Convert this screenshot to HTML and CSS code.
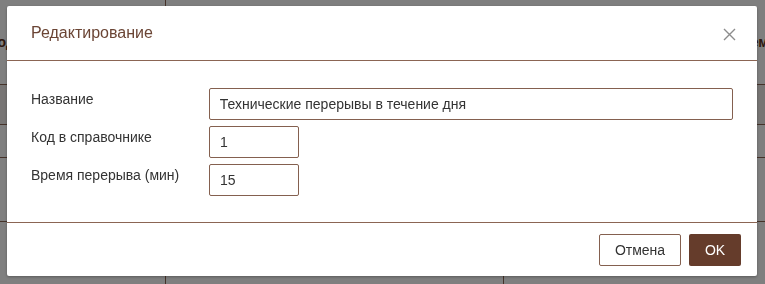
FILE: index.html
```html
<!DOCTYPE html>
<html lang="ru">
<head>
    <meta charset="UTF-8">
    <meta name="viewport" content="width=device-width, initial-scale=1.0">
    <title>Перерывы</title>
    <link rel="stylesheet" href="styles.css">
</head>
<body>

    <table class="grid">
        <thead>
            <tr class="row-head">
                <th>Код</th>
                <th></th>
                <th>Время</th>
            </tr>
        </thead>
        <tbody>
            <tr class="row-a row-hover"><td></td><td></td><td></td></tr>
            <tr class="row-b"><td></td><td></td><td class="cell-end">в</td></tr>
            <tr class="row-c"><td></td><td></td><td></td></tr>
            <tr class="row-c"><td></td><td></td><td></td></tr>
            <tr class="row-c"><td></td><td>30</td><td>0</td></tr>
        </tbody>
    </table>

    <div class="overlay"></div>

    <div class="modal">
        <div class="modal-header">
            <h3 class="modal-title">Редактирование</h3>
            <span class="modal-close">
                <svg width="13" height="13" viewBox="0 0 13 13">
                    <path d="M1 1 L12 12 M12 1 L1 12" stroke="#8c8c8c" stroke-width="1.4" fill="none"/>
                </svg>
            </span>
        </div>

        <form class="modal-body" id="formPerer">
            <div class="field">
                <label for="nama">Название</label>
                <input type="text" id="nama" class="inp" value="Технические перерывы в течение дня">
            </div>
            <div class="field">
                <label for="kod">Код в справочнике</label>
                <input type="text" id="kod" class="inp inp-short" value="1">
            </div>
            <div class="field">
                <label for="vremya">Время перерыва (мин)</label>
                <input type="text" id="vremya" class="inp inp-short" value="15">
            </div>
        </form>

        <div class="modal-footer">
            <button type="button" class="btn btn-cancel">Отмена</button>
            <button type="button" class="btn btn-ok">OK</button>
        </div>
    </div>

</body>
</html>
```

FILE: styles.css
```css
body {
    font-family: "Liberation Sans", Arial, sans-serif;
    margin: 0;
    padding: 0;
    background-color: white;
    color: #333;
    width: 765px;
    height: 284px;
    overflow: hidden;
}

/* table behind the dialog */
.grid {
    width: 800px;
    margin-left: -26px;
    border-collapse: collapse;
    table-layout: fixed;
}
.grid th, .grid td {
    border-bottom: 1px solid #8b6553;
    padding: 0 10px;
    text-align: left;
    font-size: 14px;
    color: #333;
    white-space: nowrap;
    overflow: hidden;
}
.grid th:nth-child(1), .grid td:nth-child(1) { width: 166px; }
.grid th:nth-child(2), .grid td:nth-child(2) { width: 317px; border-left: 1px solid #8b6553; }
.grid td:nth-child(3) { border-left: 1px solid #8b6553; }
.grid th {
    color: #5a3020;
    font-weight: bold;
    height: 84px;
}
.grid th:nth-child(1) { padding-left: 15px; }
.grid th:nth-child(3) { padding-left: 229px; }
.row-a td { height: 39px; }
.row-b td { height: 32px; }
.row-c td { height: 48px; }
.row-hover td { background-color: #eeebe9; }
.cell-end {
    padding-left: 276px !important;
}
.row-c td { vertical-align: top; padding-top: 15px; }

.overlay {
    position: fixed;
    inset: 0;
    background-color: rgba(0, 0, 0, 0.5);
}

/* dialog */
.modal {
    position: fixed;
    left: 7px;
    top: 6px;
    width: 750px;
    height: 270px;
    background: white;
    border-radius: 2px;
    box-shadow: 0 1px 3px rgba(0, 0, 0, 0.3);
    display: flex;
    flex-direction: column;
}
.modal-header {
    display: flex;
    align-items: center;
    justify-content: space-between;
    height: 54px;
    padding: 0 21px 0 24px;
    border-bottom: 1px solid #8b6553;
}
.modal-title {
    margin: 0;
    font-size: 16px;
    font-weight: normal;
    color: #6b4535;
}
.modal-close {
    display: flex;
    margin-top: 3px;
}
.modal-body {
    margin: 0;
    padding: 27px 24px 26px 24px;
    display: flex;
    flex-direction: column;
    gap: 6px;
    border-bottom: 1px solid #8b6553;
}
.field {
    display: flex;
    align-items: flex-start;
}
.field label {
    width: 178px;
    font-size: 14px;
    color: #333;
    padding-top: 3px;
}
.inp {
    box-sizing: border-box;
    width: 525px;
    height: 32px;
    padding: 0 10px;
    border: 1px solid #84604f;
    border-radius: 2px;
    font-family: "Liberation Sans", Arial, sans-serif;
    font-size: 14px;
    color: #333;
    outline: none;
}
.inp-short {
    width: 90px;
}
.modal-footer {
    flex: 1;
    display: flex;
    justify-content: flex-end;
    align-items: flex-start;
    gap: 8px;
    padding: 11px 16px 0 0;
}
.btn {
    box-sizing: border-box;
    height: 32px;
    font-family: "Liberation Sans", Arial, sans-serif;
    font-size: 14px;
    border-radius: 2px;
    cursor: pointer;
}
.btn-cancel {
    width: 82px;
    background: white;
    color: #333;
    border: 1px solid #84604f;
}
.btn-ok {
    width: 52px;
    background-color: #653c2b;
    color: white;
    border: none;
}
.btn-ok:hover {
    background-color: #55311f;
}
```
